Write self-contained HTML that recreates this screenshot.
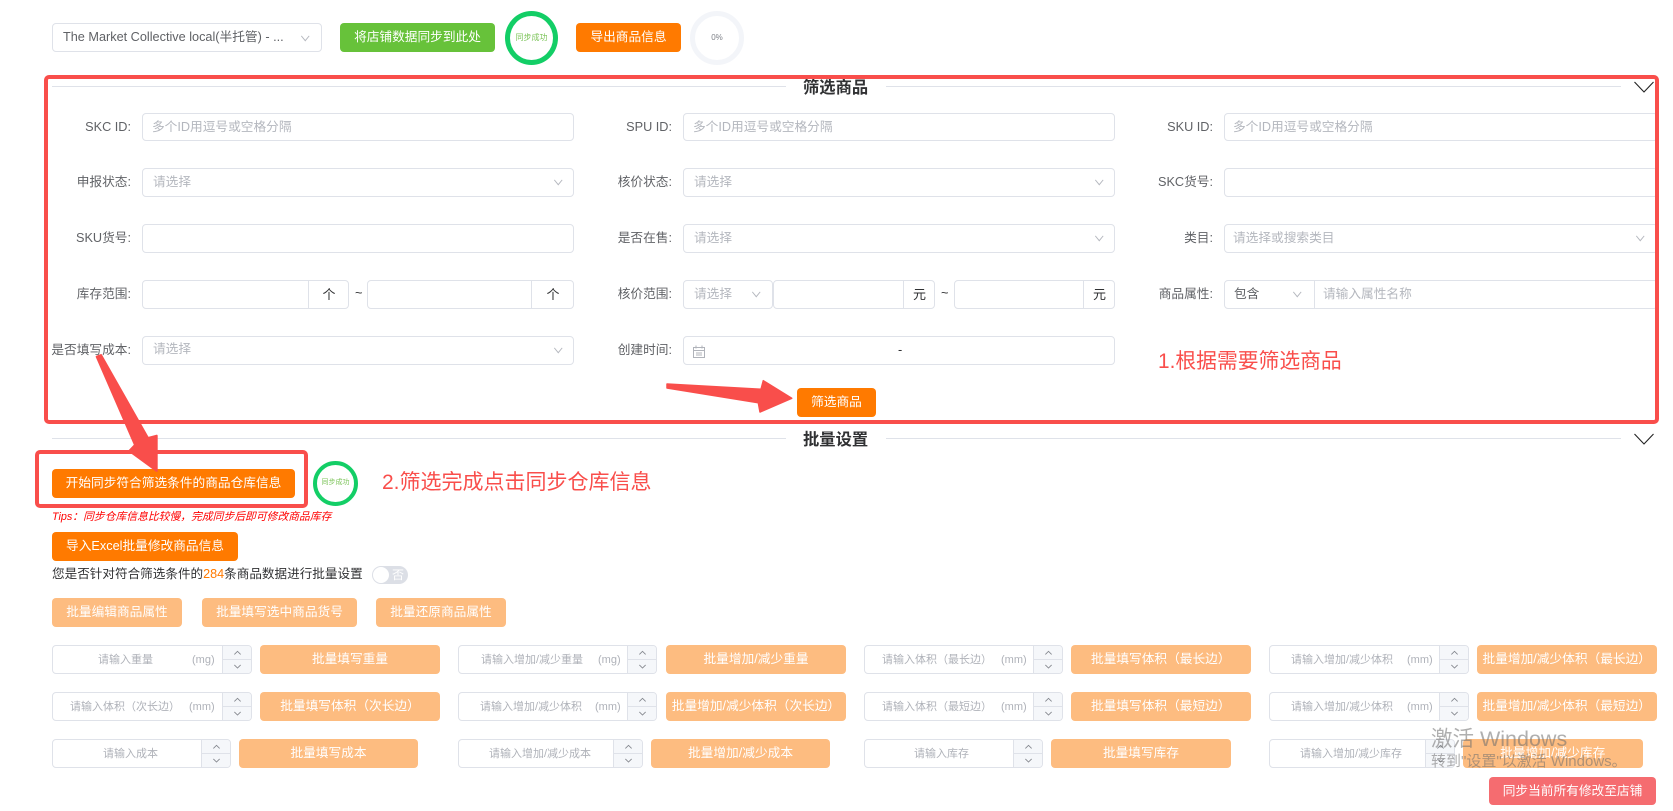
<!DOCTYPE html>
<html lang="zh-CN">
<head>
<meta charset="utf-8">
<title>筛选商品</title>
<style>
html,body{margin:0;padding:0;background:#fff;width:1673px;height:811px;overflow:hidden}
body{position:relative;font-family:"Liberation Sans","Noto Sans CJK SC",sans-serif;font-size:12.7px;color:#606266}
div,span,svg{position:absolute;box-sizing:border-box}
.i{border:1px solid #dfe2e9;border-radius:4px;background:#fff;height:29px}
.l{width:140px;text-align:right;height:28px;line-height:28px;color:#606266;white-space:nowrap}
.p{color:#b4b7be;white-space:nowrap;line-height:18px;height:18px;margin-top:1px}
.t{font-size:11px;color:#afb2b9;white-space:nowrap;line-height:16px;height:16px}
.b{border-radius:4px;color:#fff;text-align:center;height:29px;line-height:28px;white-space:nowrap}
.o{background:#ff7a00}
.f{background:#fdbc80}
.c{width:10.500px;height:7px;margin-left:1px;fill:none;stroke:#b4b7be;stroke-width:1.100}
.s{right:0;top:0;bottom:0;width:29px;border-left:1px solid #dfe2e9;background:#f5f7fa;border-radius:0 3px 3px 0}
.s:after{content:"";position:absolute;left:0;right:0;top:13px;height:1px;background:#dfe2e9}
.u{width:9px;height:5.400px;left:10px;fill:none;stroke:#84878e;stroke-width:1}
.d{height:1px;background:#dfe2e9}
.h{font-size:16.300px;font-weight:700;color:#303133;white-space:nowrap;line-height:22px;height:22px}
.v{width:1px;background:#dfe2e9;top:0;bottom:0}
.n{color:#303133;text-align:center;line-height:27px;font-size:13px}
.r{color:#f94e4b;font-size:20.800px;white-space:nowrap;line-height:28px;height:28px}
</style>
</head>
<body>

<!-- top bar -->
<div class="i" style="left:52px;top:23px;width:270px"></div>
<span style="left:63px;top:27px;line-height:20px;color:#606266;white-space:nowrap">The Market Collective local(半托管) - ...</span>
<svg class="c" style="left:299px;top:35px" viewBox="0 0 12 8"><path d="M1.500 1l4.500 5.500L10.500 1"/></svg>
<div class="b" style="left:340px;top:23px;width:155px;background:#67c23a">将店铺数据同步到此处</div>
<div style="left:505px;top:11px;width:53px;height:54px;border:5px solid #13ce66;border-radius:50%"></div>
<span style="left:505px;top:30px;width:53px;text-align:center;font-size:8px;line-height:16px;color:#7dc45a">同步成功</span>
<div class="b o" style="left:576px;top:23px;width:105px">导出商品信息</div>
<div style="left:690px;top:11px;width:54px;height:54px;border:5px solid #f3f5f9;border-radius:50%"></div>
<span style="left:690px;top:30px;width:54px;text-align:center;font-size:8px;line-height:16px;color:#7f8289">0%</span>

<!-- filter section header -->
<div class="d" style="left:52px;top:86px;width:734px"></div>
<span class="h" style="left:803px;top:77px">筛选商品</span>
<div class="d" style="left:886px;top:86px;width:735px"></div>
<svg style="left:1632.500px;top:81px;width:22px;height:12px;fill:none;stroke:#222;stroke-width:1.100" viewBox="0 0 22 12"><path d="M1.500 1L11 11L20.500 1"/></svg>

<!-- row 1 -->
<span class="l" style="left:-9px;top:113px">SKC ID:</span>
<div class="i" style="left:142px;top:113px;width:432px;height:28px"></div>
<span class="p" style="left:152px;top:117px">多个ID用逗号或空格分隔</span>
<span class="l" style="left:532px;top:113px">SPU ID:</span>
<div class="i" style="left:683px;top:113px;width:432px;height:28px"></div>
<span class="p" style="left:693px;top:117px">多个ID用逗号或空格分隔</span>
<span class="l" style="left:1073px;top:113px">SKU ID:</span>
<div class="i" style="left:1224px;top:113px;width:434px;height:28px"></div>
<span class="p" style="left:1233px;top:117px">多个ID用逗号或空格分隔</span>

<!-- row 2 -->
<span class="l" style="left:-9px;top:168px">申报状态:</span>
<div class="i" style="left:142px;top:168px;width:432px"></div>
<span class="p" style="left:153px;top:172px">请选择</span>
<svg class="c" style="left:552px;top:179px" viewBox="0 0 12 8"><path d="M1.500 1l4.500 5.500L10.500 1"/></svg>
<span class="l" style="left:532px;top:168px">核价状态:</span>
<div class="i" style="left:683px;top:168px;width:432px"></div>
<span class="p" style="left:694px;top:172px">请选择</span>
<svg class="c" style="left:1093px;top:179px" viewBox="0 0 12 8"><path d="M1.500 1l4.500 5.500L10.500 1"/></svg>
<span class="l" style="left:1073px;top:168px">SKC货号:</span>
<div class="i" style="left:1224px;top:168px;width:434px"></div>

<!-- row 3 -->
<span class="l" style="left:-9px;top:224px">SKU货号:</span>
<div class="i" style="left:142px;top:224px;width:432px"></div>
<span class="l" style="left:532px;top:224px">是否在售:</span>
<div class="i" style="left:683px;top:224px;width:432px"></div>
<span class="p" style="left:694px;top:228px">请选择</span>
<svg class="c" style="left:1093px;top:235px" viewBox="0 0 12 8"><path d="M1.500 1l4.500 5.500L10.500 1"/></svg>
<span class="l" style="left:1073px;top:224px">类目:</span>
<div class="i" style="left:1224px;top:224px;width:434px"></div>
<span class="p" style="left:1233px;top:228px">请选择或搜索类目</span>
<svg class="c" style="left:1634px;top:235px" viewBox="0 0 12 8"><path d="M1.500 1l4.500 5.500L10.500 1"/></svg>

<!-- row 4 -->
<span class="l" style="left:-9px;top:280px">库存范围:</span>
<div class="i" style="left:142px;top:280px;width:207px"><div class="v" style="left:165px"></div><div class="n" style="left:166px;top:0;width:40px">个</div></div>
<span style="left:355px;top:284px;color:#303133;line-height:18px">~</span>
<div class="i" style="left:367px;top:280px;width:207px"><div class="v" style="left:163px"></div><div class="n" style="left:164px;top:0;width:42px">个</div></div>
<span class="l" style="left:532px;top:280px">核价范围:</span>
<div class="i" style="left:683px;top:280px;width:90px"></div>
<span class="p" style="left:694px;top:284px">请选择</span>
<svg class="c" style="left:750px;top:291px" viewBox="0 0 12 8"><path d="M1.500 1l4.500 5.500L10.500 1"/></svg>
<div class="i" style="left:773px;top:280px;width:162px"><div class="v" style="left:129px"></div><div class="n" style="left:130px;top:0;width:31px">元</div></div>
<span style="left:941px;top:284px;color:#303133;line-height:18px">~</span>
<div class="i" style="left:954px;top:280px;width:161px"><div class="v" style="left:128px"></div><div class="n" style="left:129px;top:0;width:31px">元</div></div>
<span class="l" style="left:1073px;top:280px">商品属性:</span>
<div class="i" style="left:1224px;top:280px;width:434px"><div class="v" style="left:89px"></div></div>
<span style="left:1234px;top:285px;line-height:18px;color:#606266">包含</span>
<svg class="c" style="left:1291px;top:291px" viewBox="0 0 12 8"><path d="M1.500 1l4.500 5.500L10.500 1"/></svg>
<span class="p" style="left:1323px;top:284px">请输入属性名称</span>

<!-- row 5 -->
<span class="l" style="left:-9px;top:336px">是否填写成本:</span>
<div class="i" style="left:142px;top:336px;width:432px"></div>
<span class="p" style="left:153px;top:339px">请选择</span>
<svg class="c" style="left:552px;top:347px" viewBox="0 0 12 8"><path d="M1.500 1l4.500 5.500L10.500 1"/></svg>
<span class="l" style="left:532px;top:336px">创建时间:</span>
<div class="i" style="left:683px;top:336px;width:432px"></div>
<svg style="left:692.500px;top:345px;width:12px;height:13px;fill:none;stroke:#b0b3ba;stroke-width:1" viewBox="0 0 12 13"><path d="M.5 2.500h11v10h-11zM.5 5.500h11M3 .5v3M9 .5v3M3 8h6M3 10h6"/></svg>
<span style="left:898px;top:341px;line-height:18px;color:#303133">-</span>

<span class="r" style="left:1158px;top:346px;margin-top:2px">1.根据需要筛选商品</span>
<div class="b o" style="left:797px;top:388px;width:79px">筛选商品</div>

<!-- red annotation box 1 -->
<div style="left:44px;top:75px;width:1615px;height:349px;border:4px solid #f94e4b;border-radius:5px"></div>

<!-- batch section header -->
<div class="d" style="left:52px;top:438px;width:734px"></div>
<span class="h" style="left:803px;top:429px">批量设置</span>
<div class="d" style="left:886px;top:438px;width:735px"></div>
<svg style="left:1632.500px;top:433px;width:22px;height:12px;fill:none;stroke:#222;stroke-width:1.100" viewBox="0 0 22 12"><path d="M1.500 1L11 11L20.500 1"/></svg>

<div class="b o" style="left:52px;top:469px;width:243px">开始同步符合筛选条件的商品仓库信息</div>
<div style="left:35px;top:450px;width:273px;height:58px;border:4px solid #f94e4b;border-radius:5px"></div>
<div style="left:313px;top:461px;width:45px;height:45px;border:4px solid #13ce66;border-radius:50%"></div>
<span style="left:313px;top:475px;width:45px;text-align:center;font-size:7px;line-height:16px;color:#7dc45a">同步成功</span>
<span class="r" style="left:382px;top:469px;font-size:21px">2.筛选完成点击同步仓库信息</span>

<span style="left:52px;top:508px;font-size:10.800px;line-height:18px;font-style:italic;color:#f00;white-space:nowrap">Tips：同步仓库信息比较慢，完成同步后即可修改商品库存</span>
<div class="b o" style="left:52px;top:532px;width:186px">导入Excel批量修改商品信息</div>
<span style="left:52px;top:565px;line-height:18px;font-size:12.600px;color:#303133;white-space:nowrap">您是否针对符合筛选条件的<b style="font-weight:400;color:#ff7a00">284</b>条商品数据进行批量设置</span>
<div style="left:372px;top:566px;width:36px;height:18px;border-radius:9px;background:#dcdfe6"></div>
<div style="left:373px;top:567px;width:16px;height:16px;border-radius:50%;background:#fff"></div>
<span style="left:390px;top:566px;width:16px;text-align:center;font-size:12px;line-height:18px;color:#fff">否</span>

<div class="b f" style="left:52px;top:598px;width:130px">批量编辑商品属性</div>
<div class="b f" style="left:202px;top:598px;width:155px">批量填写选中商品货号</div>
<div class="b f" style="left:376px;top:598px;width:130px">批量还原商品属性</div>

<!-- row A -->
<div class="i" style="left:52px;top:645px;width:200px"><div class="s"><svg class="u" style="top:4px" viewBox="0 0 10 6"><path d="M1.500 5L5 1.500L8.500 5"/></svg><svg class="u" style="top:18px" viewBox="0 0 10 6"><path d="M1.500 1L5 4.500L8.500 1"/></svg></div></div>
<span class="t" style="left:98px;top:652px">请输入重量</span><span class="t" style="left:192px;top:652px">(mg)</span>
<div class="b f" style="left:260px;top:645px;width:180px">批量填写重量</div>

<div class="i" style="left:458px;top:645px;width:199px"><div class="s"><svg class="u" style="top:4px" viewBox="0 0 10 6"><path d="M1.500 5L5 1.500L8.500 5"/></svg><svg class="u" style="top:18px" viewBox="0 0 10 6"><path d="M1.500 1L5 4.500L8.500 1"/></svg></div></div>
<span class="t" style="left:481px;top:652px">请输入增加/减少重量</span><span class="t" style="left:598px;top:652px">(mg)</span>
<div class="b f" style="left:666px;top:645px;width:180px">批量增加/减少重量</div>

<div class="i" style="left:864px;top:645px;width:199px"><div class="s"><svg class="u" style="top:4px" viewBox="0 0 10 6"><path d="M1.500 5L5 1.500L8.500 5"/></svg><svg class="u" style="top:18px" viewBox="0 0 10 6"><path d="M1.500 1L5 4.500L8.500 1"/></svg></div></div>
<span class="t" style="left:882px;top:652px">请输入体积（最长边）</span><span class="t" style="left:1001px;top:652px">(mm)</span>
<div class="b f" style="left:1071px;top:645px;width:179.500px">批量填写体积（最长边）</div>

<div class="i" style="left:1269px;top:645px;width:200px"><div class="s"><svg class="u" style="top:4px" viewBox="0 0 10 6"><path d="M1.500 5L5 1.500L8.500 5"/></svg><svg class="u" style="top:18px" viewBox="0 0 10 6"><path d="M1.500 1L5 4.500L8.500 1"/></svg></div></div>
<span class="t" style="left:1291px;top:652px">请输入增加/减少体积</span><span class="t" style="left:1407px;top:652px">(mm)</span>
<div class="b f" style="left:1477px;top:645px;width:179.500px">批量增加/减少体积（最长边）</div>

<!-- row B -->
<div class="i" style="left:52px;top:692px;width:200px"><div class="s"><svg class="u" style="top:4px" viewBox="0 0 10 6"><path d="M1.500 5L5 1.500L8.500 5"/></svg><svg class="u" style="top:18px" viewBox="0 0 10 6"><path d="M1.500 1L5 4.500L8.500 1"/></svg></div></div>
<span class="t" style="left:70px;top:699px">请输入体积（次长边）</span><span class="t" style="left:189px;top:699px">(mm)</span>
<div class="b f" style="left:260px;top:692px;width:180px">批量填写体积（次长边）</div>

<div class="i" style="left:458px;top:692px;width:199px"><div class="s"><svg class="u" style="top:4px" viewBox="0 0 10 6"><path d="M1.500 5L5 1.500L8.500 5"/></svg><svg class="u" style="top:18px" viewBox="0 0 10 6"><path d="M1.500 1L5 4.500L8.500 1"/></svg></div></div>
<span class="t" style="left:480px;top:699px">请输入增加/减少体积</span><span class="t" style="left:595px;top:699px">(mm)</span>
<div class="b f" style="left:666px;top:692px;width:180px">批量增加/减少体积（次长边）</div>

<div class="i" style="left:864px;top:692px;width:199px"><div class="s"><svg class="u" style="top:4px" viewBox="0 0 10 6"><path d="M1.500 5L5 1.500L8.500 5"/></svg><svg class="u" style="top:18px" viewBox="0 0 10 6"><path d="M1.500 1L5 4.500L8.500 1"/></svg></div></div>
<span class="t" style="left:882px;top:699px">请输入体积（最短边）</span><span class="t" style="left:1001px;top:699px">(mm)</span>
<div class="b f" style="left:1071px;top:692px;width:179.500px">批量填写体积（最短边）</div>

<div class="i" style="left:1269px;top:692px;width:200px"><div class="s"><svg class="u" style="top:4px" viewBox="0 0 10 6"><path d="M1.500 5L5 1.500L8.500 5"/></svg><svg class="u" style="top:18px" viewBox="0 0 10 6"><path d="M1.500 1L5 4.500L8.500 1"/></svg></div></div>
<span class="t" style="left:1291px;top:699px">请输入增加/减少体积</span><span class="t" style="left:1407px;top:699px">(mm)</span>
<div class="b f" style="left:1477px;top:692px;width:179.500px">批量增加/减少体积（最短边）</div>

<!-- row C -->
<div class="i" style="left:52px;top:739px;width:179px"><div class="s"><svg class="u" style="top:4px" viewBox="0 0 10 6"><path d="M1.500 5L5 1.500L8.500 5"/></svg><svg class="u" style="top:18px" viewBox="0 0 10 6"><path d="M1.500 1L5 4.500L8.500 1"/></svg></div></div>
<span class="t" style="left:103px;top:746px">请输入成本</span>
<div class="b f" style="left:239px;top:739px;width:179px">批量填写成本</div>

<div class="i" style="left:458px;top:739px;width:185px"><div class="s"><svg class="u" style="top:4px" viewBox="0 0 10 6"><path d="M1.500 5L5 1.500L8.500 5"/></svg><svg class="u" style="top:18px" viewBox="0 0 10 6"><path d="M1.500 1L5 4.500L8.500 1"/></svg></div></div>
<span class="t" style="left:489px;top:746px">请输入增加/减少成本</span>
<div class="b f" style="left:651px;top:739px;width:179px">批量增加/减少成本</div>

<div class="i" style="left:864px;top:739px;width:179px"><div class="s"><svg class="u" style="top:4px" viewBox="0 0 10 6"><path d="M1.500 5L5 1.500L8.500 5"/></svg><svg class="u" style="top:18px" viewBox="0 0 10 6"><path d="M1.500 1L5 4.500L8.500 1"/></svg></div></div>
<span class="t" style="left:914px;top:746px">请输入库存</span>
<div class="b f" style="left:1051px;top:739px;width:180px">批量填写库存</div>

<div class="i" style="left:1269px;top:739px;width:186px"><div class="s"><svg class="u" style="top:4px" viewBox="0 0 10 6"><path d="M1.500 5L5 1.500L8.500 5"/></svg><svg class="u" style="top:18px" viewBox="0 0 10 6"><path d="M1.500 1L5 4.500L8.500 1"/></svg></div></div>
<span class="t" style="left:1300px;top:746px">请输入增加/减少库存</span>
<div class="b f" style="left:1463px;top:739px;width:179.500px">批量增加/减少库存</div>

<div class="b" style="left:1489px;top:777px;width:167px;height:28px;background:#f56c70">同步当前所有修改至店铺</div>

<!-- windows watermark -->
<span style="left:1431px;top:724px;font-size:21.500px;line-height:30px;color:rgba(110,110,110,.55);white-space:nowrap">激活 Windows</span>
<span style="left:1431px;top:752px;font-size:15px;line-height:20px;color:rgba(110,110,110,.55);white-space:nowrap">转到"设置"以激活 Windows。</span>

<!-- arrows -->
<svg style="left:0;top:0;width:1673px;height:811px" viewBox="0 0 1673 811">
<path fill="#f94e4b" stroke="#f94e4b" stroke-width="1.500" stroke-linejoin="round" d="M667 384L761 389.300L763.300 380.700L791.700 398.300L760 412L758.300 402.700L667 388Z"/>
<path fill="#f94e4b" stroke="#f94e4b" stroke-width="2" stroke-linejoin="round" d="M96.700 356.700L101 355L148 438L156.700 435.700L156.700 471L129.300 451L135 445Z"/>
</svg>
</body>
</html>
